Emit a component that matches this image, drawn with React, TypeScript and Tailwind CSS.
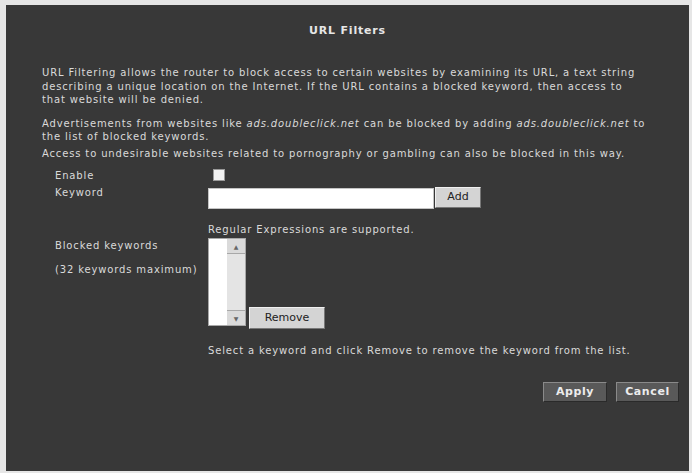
import React from "react";

const font = { fontFamily: '"DejaVu Sans", Verdana, sans-serif' };

export default function App() {
  return (
    <div className="w-[692px] h-[473px] bg-[#e6e6e6] pt-[5px] pl-[6px] overflow-hidden" style={font}>
      <div className="w-[683px] h-[466px] bg-[#383838] text-[#dadada] text-[10px] tracking-[0.85px] whitespace-nowrap">
        <h1 className="pt-[19px] text-center text-[11px] font-bold text-[#e6e6e6] leading-[14px] tracking-[0.8px]">
          URL Filters
        </h1>

        <div className="pl-[36px]">
          <p className="mt-[28px] leading-[13.5px]">
            URL Filtering allows the router to block access to certain websites by examining its URL, a text string
            <br />
            describing a unique location on the Internet. If the URL contains a blocked keyword, then access to
            <br />
            that website will be denied.
          </p>
          <p className="mt-[10px] leading-[13.5px]">
            Advertisements from websites like <i>ads.doubleclick.net</i> can be blocked by adding{" "}
            <i>ads.doubleclick.net</i> to
            <br />
            the list of blocked keywords.
          </p>
          <p className="mt-[3px] leading-[13.5px]">
            Access to undesirable websites related to pornography or gambling can also be blocked in this way.
          </p>
        </div>

        <div className="pl-[49px]">
          <div className="mt-[9px] flex h-[13px]">
            <div className="w-[153px] leading-[13px]">Enable</div>
            <div className="pl-[5px]">
              <div className="w-[12px] h-[12px] bg-[#f2f2f2] border border-[#9a9a9a]" />
            </div>
          </div>

          <div className="mt-[6px] flex">
            <div className="w-[153px] leading-[10px]">Keyword</div>
            <div className="flex">
              <div className="w-[226px] h-[21px] bg-white border border-[#c4c4c4]" />
              <button className="ml-[1px] -mt-[1px] w-[46px] h-[21px] bg-[#d4d4d4] border border-t-[#f0f0f0] border-l-[#f0f0f0] border-r-[#777] border-b-[#777] text-[#222] text-[11px] tracking-normal">
                Add
              </button>
            </div>
          </div>

          <div className="flex">
            <div className="w-[153px] flex flex-col pt-[29.5px] leading-[13px]">
              <span>Blocked keywords</span>
              <span className="mt-[11px]">(32 keywords maximum)</span>
            </div>
            <div className="flex flex-col">
              <div className="mt-[13.5px] leading-[13px]">Regular Expressions are supported.</div>
              <div className="mt-[2.5px] flex items-end">
                <div className="w-[38px] h-[88px] bg-white border border-[#a8a8a8] flex justify-end">
                  <div className="w-[18px] h-full bg-[#e4e4e4] flex flex-col justify-between">
                    <div className="h-[15px] bg-[#dadada] border-b border-[#a8a8a8] flex items-center justify-center text-[6px] text-[#666] tracking-normal">
                      ▲
                    </div>
                    <div className="h-[15px] bg-[#dadada] border-t border-[#a8a8a8] flex items-center justify-center text-[6px] text-[#666] tracking-normal">
                      ▼
                    </div>
                  </div>
                </div>
                <button className="ml-[3px] -mb-[3px] w-[76px] h-[22px] bg-[#d4d4d4] border border-t-[#f0f0f0] border-l-[#f0f0f0] border-r-[#777] border-b-[#777] text-[#222] text-[11px] tracking-normal">
                  Remove
                </button>
              </div>
              <div className="mt-[17.5px] leading-[13px]">
                Select a keyword and click Remove to remove the keyword from the list.
              </div>
            </div>
          </div>
        </div>

        <div className="mt-[25.5px] pr-[10px] flex justify-end gap-[9px]">
          <button className="w-[64px] h-[20px] bg-[#595959] border border-t-[#8a8a8a] border-l-[#8a8a8a] border-r-[#2a2a2a] border-b-[#2a2a2a] text-[#ececec] text-[11px] font-bold tracking-[0.6px]">
            Apply
          </button>
          <button className="w-[63px] h-[20px] bg-[#595959] border border-t-[#8a8a8a] border-l-[#8a8a8a] border-r-[#2a2a2a] border-b-[#2a2a2a] text-[#ececec] text-[11px] font-bold tracking-[0.6px]">
            Cancel
          </button>
        </div>
      </div>
    </div>
  );
}
